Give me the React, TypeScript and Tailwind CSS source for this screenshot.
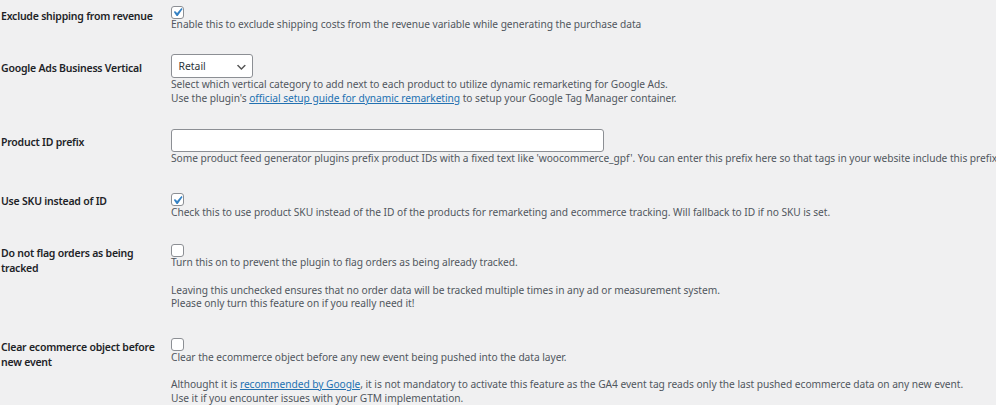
import React from "react";

const font = "font-['Noto_Sans','Open_Sans',sans-serif]";
const descLine =
  "block h-[13.7px] leading-[13.7px] whitespace-nowrap text-[#50575e] text-[10.2px] tracking-[-0.04px]";
const link = "text-[#2271b1] underline";

function Checkbox({ checked = false }: { checked?: boolean }) {
  return (
    <span className="block h-[12.5px]">
      <span className="relative block w-[13px] h-[13px] rounded-[3px] border border-[#8c8f94] bg-white">
        {checked && (
          <svg
            viewBox="0 0 20 20"
            className="absolute left-[-3.2px] top-[-2.4px] w-[16.8px] h-[16.8px]"
          >
            <path
              d="M14.83 4.89l1.34.94-5.81 8.38H9.02L5.78 9.67l1.34-1.25 2.57 2.4z"
              fill="#3582c4"
            />
          </svg>
        )}
      </span>
    </span>
  );
}

function Label({ pad, lines }: { pad: string; lines: string[] }) {
  return (
    <div className={`w-[171px] shrink-0 pl-[1px] ${pad}`}>
      {lines.map((l) => (
        <span
          key={l}
          className="block whitespace-nowrap text-[10.5px] tracking-[-0.22px] leading-[14.6px] font-semibold text-[#1d2327]"
        >
          {l}
        </span>
      ))}
    </div>
  );
}

export default function App() {
  return (
    <div className={`w-[996px] h-[405px] overflow-hidden bg-[#f0f0f1] pt-[5.5px] ${font}`}>
      {/* Exclude shipping */}
      <div className="flex items-start">
        <Label pad="pt-[3.3px]" lines={["Exclude shipping from revenue"]} />
        <div className="flex flex-col">
          <Checkbox checked />
          <span className={descLine}>
            Enable this to exclude shipping costs from the revenue variable while generating the purchase data
          </span>
        </div>
      </div>

      {/* Business vertical */}
      <div className="flex items-start mt-[22.6px]">
        <Label pad="pt-[6.7px]" lines={["Google Ads Business Vertical"]} />
        <div className="flex flex-col">
          <div className="relative flex items-center w-[82px] h-[24px] rounded-[3px] border border-[#8c8f94] bg-white pl-[6.5px]">
            <span className="text-[10.4px] text-[#2c3338] leading-none">Retail</span>
            <svg viewBox="0 0 20 20" className="absolute right-[4px] top-[5.5px] w-[12.8px] h-[12.8px]">
              <path d="M5 6l5 5 5-5 2 1-7 7-7-7 2-1z" fill="#555" />
            </svg>
          </div>
          <span className={descLine}>
            Select which vertical category to add next to each product to utilize dynamic remarketing for Google Ads.
          </span>
          <span className={descLine}>
            Use the plugin's <a className={link}>official setup guide for dynamic remarketing</a> to setup your Google Tag Manager container.
          </span>
        </div>
      </div>

      {/* Product ID prefix */}
      <div className="flex items-start mt-[23.6px]">
        <Label pad="pt-[5.7px]" lines={["Product ID prefix"]} />
        <div className="flex flex-col">
          <div className="w-[433px] h-[23px] rounded-[3px] border border-[#8c8f94] bg-white" />
          <span className={descLine}>
            Some product feed generator plugins prefix product IDs with a fixed text like 'woocommerce_gpf'. You can enter this prefix here so that tags in your website include this prefix as well.
          </span>
        </div>
      </div>

      {/* Use SKU */}
      <div className="flex items-start mt-[27.3px]">
        <Label pad="pt-[1.1px]" lines={["Use SKU instead of ID"]} />
        <div className="flex flex-col">
          <Checkbox checked />
          <span className={descLine}>
            Check this to use product SKU instead of the ID of the products for remarketing and ecommerce tracking. Will fallback to ID if no SKU is set.
          </span>
        </div>
      </div>

      {/* Do not flag orders */}
      <div className="flex items-start mt-[24.5px]">
        <Label pad="pt-[2px]" lines={["Do not flag orders as being", "tracked"]} />
        <div className="flex flex-col">
          <Checkbox />
          <span className={descLine}>
            Turn this on to prevent the plugin to flag orders as being already tracked.
          </span>
          <span className={descLine} />
          <span className={descLine}>
            Leaving this unchecked ensures that no order data will be tracked multiple times in any ad or measurement system.
          </span>
          <span className={descLine}>Please only turn this feature on if you really need it!</span>
        </div>
      </div>

      {/* Clear ecommerce object */}
      <div className="flex items-start mt-[27px]">
        <Label pad="pt-[2px]" lines={["Clear ecommerce object before", "new event"]} />
        <div className="flex flex-col">
          <Checkbox />
          <span className={descLine}>
            Clear the ecommerce object before any new event being pushed into the data layer.
          </span>
          <span className={descLine} />
          <span className={descLine}>
            Althought it is <a className={link}>recommended by Google</a>, it is not mandatory to activate this feature as the GA4 event tag reads only the last pushed ecommerce data on any new event.
          </span>
          <span className={descLine}>Use it if you encounter issues with your GTM implementation.</span>
        </div>
      </div>
    </div>
  );
}
